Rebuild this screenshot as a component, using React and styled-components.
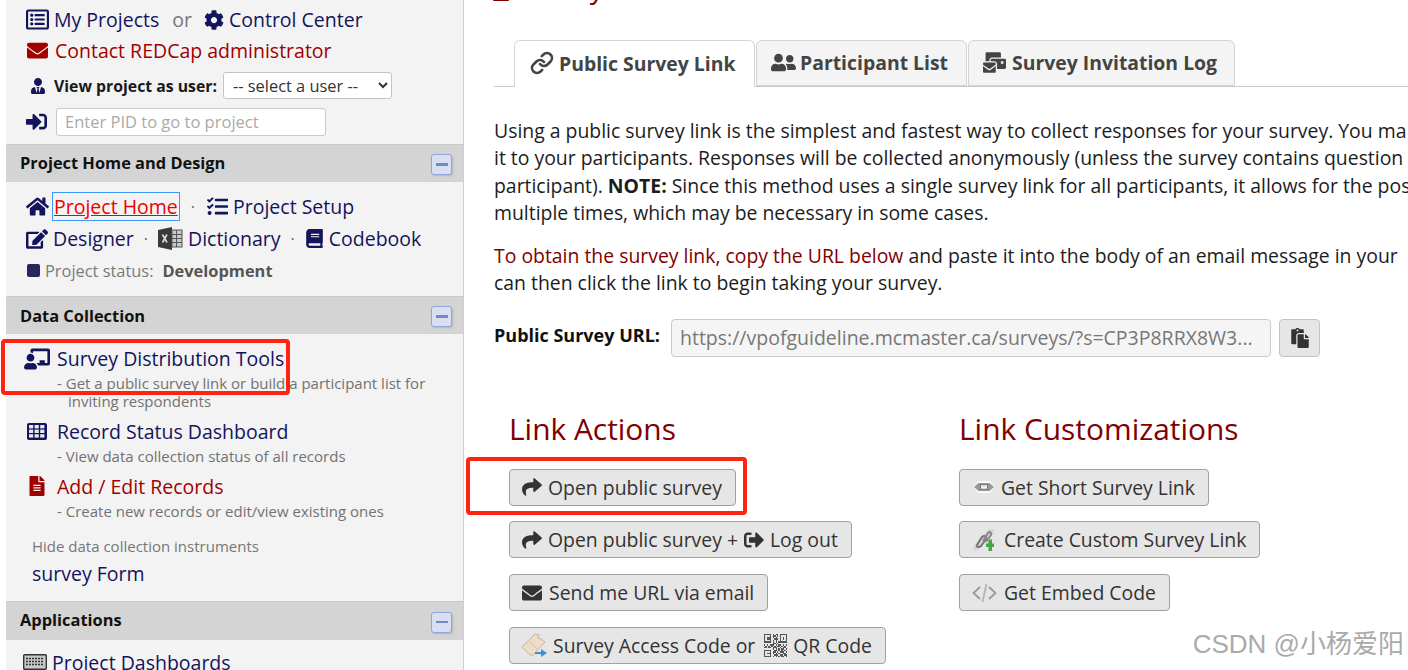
import React from 'react'
import styled, { createGlobalStyle } from 'styled-components'
import {
  FaRegListAlt, FaCog, FaEnvelope, FaUserTie, FaSignInAlt, FaHome, FaTasks, FaEdit, FaBook,
  FaChalkboardTeacher, FaFileAlt, FaUserFriends, FaMailBulk, FaPaste, FaShare, FaSignOutAlt
} from 'react-icons/fa'
import { Link as LinkIcon } from 'lucide-react'

const GlobalStyle = createGlobalStyle`
  html, body { margin: 0; padding: 0; height: 670px; overflow: hidden; background: #fff; }
  body { font-family: "Open Sans", "Noto Sans", sans-serif; }
  * { box-sizing: border-box; }
`

const NAVY = '#14145c'
const DARK_RED = '#800000'

const ExcelIcon = () => (
  <svg width="25" height="23" viewBox="0 0 25 23">
    <path d="M0 3 L14 0 V23 L0 20 Z" fill="#3a3a3a" />
    <rect x="14" y="3" width="10" height="17" fill="#c9c9c9" stroke="#555" strokeWidth="1" />
    <path d="M14 7.5H24M14 11.5H24M14 15.5H24M18.5 3V20" stroke="#555" strokeWidth="1" />
    <path d="M4.5 7.5 L9 15.5 M9 7.5 L4.5 15.5" stroke="#ddd" strokeWidth="1.6" />
  </svg>
)

const GridIcon = () => (
  <svg width="20" height="17" viewBox="0 0 20 17">
    <rect width="20" height="17" rx="2" fill={NAVY} />
    {[0, 1, 2].map(r => [0, 1, 2].map(c => (
      <rect key={r + '-' + c} x={2 + c * 5.6} y={2 + r * 4.6} width="4.2" height="3.4" fill="#e6e6ee" />
    )))}
  </svg>
)

const KeyboardIcon = () => (
  <svg width="24" height="16" viewBox="0 0 24 16">
    <rect x=".7" y=".7" width="22.6" height="14.6" rx="1" fill="#c8c8c8" stroke="#333" strokeWidth="1.4" />
    <path d="M3 4.5H21M3 7.5H21M3 10.5H21" stroke="#333" strokeWidth="1.6" strokeDasharray="2 1" />
  </svg>
)

const ZipLinkIcon = () => (
  <svg width="22" height="14" viewBox="0 0 22 14">
    <path d="M0 7 L5 1 H17 L22 7 L17 13 H5 Z" fill="#f8f8f8" />
    <path d="M1 7 L5.5 3 H16.5 L21 7 L16.5 11 H5.5 Z" fill="#989898" />
    <rect x="7.5" y="4.8" width="7" height="4.4" fill="#eee" stroke="#666" strokeWidth=".8" />
  </svg>
)

const CustomLinkIcon = () => (
  <svg width="25" height="25" viewBox="0 0 25 25">
    <path d="M1 20 L17 2 L22 2 L21 7 L6 23 L2 24 Z" fill="#d6d6d6" />
    <path d="M5 18 L10 10 C12 8 15 9 14 12 L9 19 C7 21 4 20 5 18 Z" fill="none" stroke="#777" strokeWidth="2" />
    <path d="M11 14 L16 6 C18 4 20 6 19 8 L14 15" fill="none" stroke="#8a8a8a" strokeWidth="2" />
    <path d="M16.5 16 H20 V12.5 H16.5 Z M14 16.5 H22 V20 H14 Z M16.5 16 H20 V24 H16.5 Z" fill="#43a843" />
  </svg>
)

const CodeIcon = () => (
  <svg width="25" height="20" viewBox="0 0 25 20" fill="none" stroke="#999" strokeWidth="1.8">
    <path d="M8 4 L1.5 10 L8 16" />
    <path d="M17 4 L23.5 10 L17 16" />
    <path d="M14.5 1 L10.5 19" stroke="#b5b5b5" />
  </svg>
)

const TicketIcon = () => (
  <svg width="25" height="25" viewBox="0 0 25 25">
    <path d="M0 14 L13 1 L17 2 L16 5 L19 6 L23 9 L10 23 L7 21 Z" fill="#ecdcc8" stroke="#b9ab99" strokeWidth=".8" />
    <path d="M8 9 L15 16" stroke="#b9ab99" strokeWidth=".8" strokeDasharray="2 1" />
    <path d="M13 19 H19 V16 L25 20 L19 24 V21 H13 Z" fill="#3f8fd8" />
  </svg>
)

const TitleIcon = () => (
  <svg width="16" height="20" viewBox="0 0 16 20">
    <path d="M2 0 H14 V14 H2 Z" fill="none" stroke={DARK_RED} strokeWidth="2" />
    <rect y="16" width="16" height="4" rx="1" fill={DARK_RED} />
  </svg>
)

const qrCells = [
  '1111101011011111', '1000101101010001', '1011101010010101', '1011100111010101',
  '1000101010010001', '1111101010111111', '0000001101000000', '1010111010110101',
  '0101010101101010', '1101101110010110', '0000001010101101', '1111100110101010',
  '1000101101011101', '1011101010100110', '1000100111011011', '1111101010101101'
]

const QrSvg = styled.svg`
  margin-left: 3px;
`

const QrIcon = () => (
  <QrSvg width="23" height="23" viewBox="0 0 16 16" shapeRendering="crispEdges">
    {qrCells.map((row, y) => row.split('').map((c, x) => c === '1' && <rect key={x + '-' + y} x={x} y={y} width="1" height="1" fill="#555" />))}
  </QrSvg>
)

const Page = styled.div`
  display: flex;
  width: 1408px;
  height: 670px;
  overflow: hidden;
  background: #fff;
`
const Sidebar = styled.aside`
  flex: 0 0 458px;
  height: 670px;
  margin-left: 6px;
  background: #f3f3f3;
  border-right: 1px solid #cfcfcf;
  overflow: hidden;
`
const TopLinks = styled.div`
  padding: 4px 0 0 20px;
  height: 144px;
`
const NavRow = styled.div`
  display: flex;
  align-items: center;
  height: ${p => p.$h || 31}px;
  white-space: nowrap;
`
const NavLink = styled.a`
  display: inline-flex;
  align-items: center;
  font-size: 19.5px;
  color: ${p => p.$red ? '#a00000' : NAVY};
  svg { flex: none; margin-right: ${p => p.$iconGap ?? 5}px; }
`
const MailIcon = styled(FaEnvelope)`
  color: #a00000;
  && { margin: 0 7px 0 1px; }
`
const UserIcon = styled(FaUserTie)`
  margin-left: 4px;
  color: ${NAVY};
`
const Or = styled.span`
  font-size: 19.5px;
  color: #777;
  margin: 0 12px 0 13px;
`
const Dot = styled.span`
  font-size: 16px;
  color: #666;
  margin: 0 ${p => p.$gap || 10}px;
`
const BoldLabel = styled.span`
  font-size: 15.8px;
  font-weight: 700;
  color: #1a1a1a;
  margin: 0 6px 0 8px;
`
const UserSelect = styled.select`
  width: 169px;
  height: 27px;
  font-family: inherit;
  font-size: 16.4px;
  color: #333;
  background: #fff;
  border: 1px solid #c4c4c4;
  border-radius: 3px;
  padding: 0 0 0 5px;
`
const PidInput = styled.input`
  width: 270px;
  height: 28px;
  margin-left: 9px;
  padding: 0 8px;
  font-family: inherit;
  font-size: 16.5px;
  background: #fff;
  border: 1px solid #c9c9c9;
  border-radius: 3px;
  &::placeholder { color: #aaa; opacity: 1; }
`
const SectionHead = styled.div`
  display: flex;
  align-items: center;
  justify-content: space-between;
  height: ${p => p.$h || 38}px;
  padding: 0 11px ${p => p.$lift || 0}px 14px;
  background: #d4d4d4;
  border-top: 1px solid #cacaca;
  font-size: 16.4px;
  font-weight: 700;
  color: #111;
`
const Collapse = styled.span`
  display: flex;
  align-items: center;
  justify-content: center;
  width: 21px;
  height: 21px;
  margin-top: ${p => p.$top ?? 2}px;
  background: #d9dff0;
  border: 1px solid #8ea6e0;
  border-radius: 3px;
  box-shadow: 1px 1px 2px #b5b5b5;
  &::before {
    content: "";
    width: 12px;
    height: 2.5px;
    background: #6d8acb;
  }
`
const SectionBody = styled.div`
  padding: ${p => p.$top || 8}px 0 0 ${p => p.$left || 20}px;
  height: ${p => p.$h}px;
`
const FocusLink = styled.a`
  font-size: 19.5px;
  color: #f00000;
  text-decoration: underline;
  outline: 1px solid #3b99fc;
  padding: 0 1px;
  margin-left: 4px;
  line-height: 27px;
`
const StatusRow = styled(NavRow)`
  font-size: 16.4px;
  color: #7a7a7a;
  &::before {
    content: "";
    width: 13px;
    height: 13px;
    margin-right: 5px;
    margin-left: 1px;
    border-radius: 2px;
    background: #26265e;
  }
  b { color: #555; margin-left: 9px; }
`
const ToolIcon = styled.span`
  display: flex;
  justify-content: center;
  flex: none;
  width: 31px;
  margin-right: 5px;
`
const SubText = styled.div`
  margin-left: 36px;
  padding-left: ${p => p.$wrap ? 11 : 0}px;
  text-indent: ${p => p.$wrap ? -11 : 0}px;
  font-size: 15px;
  line-height: 18px;
  color: #727272;
  width: 385px;
`
const ToolRow = styled(NavRow)`
  margin-top: ${p => p.$gap}px;
`
const HideLink = styled.div`
  margin: 16px 0 0 11px;
  font-size: 15px;
  line-height: 20px;
  color: #777;
`
const FormLink = styled.a`
  display: block;
  margin: 4px 0 0 11px;
  font-size: 19.5px;
  line-height: 27px;
  color: ${NAVY};
`
const Main = styled.main`
  flex: 1;
  min-width: 0;
  padding-left: 30px;
  overflow: hidden;
`
const Title = styled.h1`
  display: flex;
  align-items: flex-end;
  height: 40px;
  margin: -35px 0 35px;
  font-size: 28px;
  font-weight: 400;
  line-height: 36px;
  white-space: nowrap;
  color: ${DARK_RED};
  svg { margin: 0 7px 4px -1px; }
`
const Tabs = styled.div`
  display: flex;
  height: 47px;
  padding-left: 20px;
  gap: 1px;
  border-bottom: 1px solid #c8c8c8;
`
const Tab = styled.div`
  display: flex;
  align-items: center;
  gap: ${p => p.$gap || 5}px;
  height: ${p => p.$active ? 47 : 46}px;
  width: ${p => p.$w}px;
  padding: 0 0 2px ${p => p.$active ? 15 : 14}px;
  background: ${p => p.$active ? '#fff' : '#f4f4f4'};
  border: 1px solid #d4d4d4;
  border-bottom: ${p => p.$active ? 'none' : '1px solid #d4d4d4'};
  border-radius: 6px 6px 0 0;
  font-size: 19.4px;
  font-weight: 700;
  white-space: nowrap;
  color: #444;
  svg { flex: none; }
`
const Copy = styled.div`
  margin-top: ${p => p.$top}px;
  font-size: 19.4px;
  line-height: 27.3px;
  color: #1c1c1c;
  white-space: nowrap;
`
const Note = styled.span`
  color: ${DARK_RED};
`
const UrlRow = styled.div`
  display: flex;
  align-items: center;
  margin-top: 22px;
`
const UrlLabel = styled.label`
  width: 177px;
  margin-top: -5px;
  font-size: 18px;
  font-weight: 700;
  color: #111;
`
const UrlField = styled.div`
  display: flex;
  align-items: center;
  width: 600px;
  height: 38px;
  padding: 0 8px;
  font-size: 19.5px;
  color: #777;
  white-space: nowrap;
  background: #f5f5f5;
  border: 1px solid #c9c9c9;
  border-radius: 4px;
`
const CopyButton = styled.button`
  display: flex;
  align-items: center;
  justify-content: center;
  width: 41px;
  height: 38px;
  margin-left: 8px;
  color: #333;
  background: #e6e6e6;
  border: 1px solid #c4c4c4;
  border-radius: 4px;
`
const Columns = styled.div`
  display: flex;
  margin-top: 52px;
  padding-left: 15px;
`
const Column = styled.section`
  width: 450px;
  flex: none;
  display: flex;
  flex-direction: column;
  align-items: flex-start;
`
const ColumnTitle = styled.h2`
  margin: 0 0 20px;
  font-size: 29.9px;
  font-weight: 400;
  line-height: 40px;
  color: ${DARK_RED};
`
const ActionButton = styled.button`
  display: flex;
  align-items: center;
  gap: ${p => p.$gap ?? 7}px;
  height: 37px;
  margin-bottom: 15.7px;
  padding: 0 13px 0 ${p => p.$left || 12}px;
  font-family: inherit;
  font-size: 19.4px;
  color: #333;
  white-space: nowrap;
  background: #e6e6e6;
  border: 1px solid #a0a0a0;
  border-radius: 4px;
  svg { flex: none; }
`
const Highlight = styled.div`
  position: absolute;
  left: ${p => p.$x}px;
  top: ${p => p.$y}px;
  width: ${p => p.$w}px;
  height: ${p => p.$h}px;
  border: 4px solid #ff2412;
  border-radius: 4px;
`
const Watermark = styled.div`
  position: absolute;
  right: 4px;
  top: 623px;
  font-family: "Liberation Sans", "Noto Sans CJK SC", sans-serif;
  font-size: 26px;
  color: #aaa;
  white-space: nowrap;
`

const App = () => {
  return (
    <Page>
      <GlobalStyle />
      <Sidebar>
        <TopLinks>
          <NavRow>
            <NavLink><FaRegListAlt size={23} />My Projects</NavLink>
            <Or>or</Or>
            <NavLink><FaCog size={20} />Control Center</NavLink>
          </NavRow>
          <NavRow>
            <NavLink $red><MailIcon size={21} />Contact REDCap administrator</NavLink>
          </NavRow>
          <NavRow $h={39}>
            <UserIcon size={16} />
            <BoldLabel>View project as user:</BoldLabel>
            <UserSelect defaultValue="">
              <option value="">-- select a user --</option>
            </UserSelect>
          </NavRow>
          <NavRow $h={33}>
            <FaSignInAlt size={21} color={NAVY} />
            <PidInput placeholder="Enter PID to go to project" />
          </NavRow>
        </TopLinks>

        <SectionHead $lift={2}>Project Home and Design<Collapse $top={4} /></SectionHead>
        <SectionBody $h={114}>
          <NavRow $h={33}>
            <NavLink $iconGap={0}><FaHome size={23} />
            </NavLink>
            <FocusLink>Project Home</FocusLink>
            <Dot $gap={12}>·</Dot>
            <NavLink $iconGap={5}><FaTasks size={21} />Project Setup</NavLink>
          </NavRow>
          <NavRow $h={31}>
            <NavLink><FaEdit size={22} />Designer</NavLink>
            <Dot $gap={10}>·</Dot>
            <NavLink><ExcelIcon />Dictionary</NavLink>
            <Dot $gap={10}>·</Dot>
            <NavLink><FaBook size={19} />Codebook</NavLink>
          </NavRow>
          <StatusRow $h={32}>Project status: <b>Development</b></StatusRow>
        </SectionBody>

        <SectionHead>Data Collection<Collapse /></SectionHead>
        <SectionBody $h={267} $top={9} $left={15}>
          <NavRow $h={31}>
            <ToolIcon><FaChalkboardTeacher size={26} color={NAVY} /></ToolIcon>
            <NavLink>Survey Distribution Tools</NavLink>
          </NavRow>
          <SubText $wrap>- Get a public survey link or build a participant list for inviting respondents</SubText>
          <ToolRow $h={31} $gap={6}>
            <ToolIcon><GridIcon /></ToolIcon>
            <NavLink>Record Status Dashboard</NavLink>
          </ToolRow>
          <SubText>- View data collection status of all records</SubText>
          <ToolRow $h={32} $gap={5}>
            <ToolIcon><FaFileAlt size={20} color="#a00000" /></ToolIcon>
            <NavLink $red>Add / Edit Records</NavLink>
          </ToolRow>
          <SubText>- Create new records or edit/view existing ones</SubText>
          <HideLink>Hide data collection instruments</HideLink>
          <FormLink>survey Form</FormLink>
        </SectionBody>

        <SectionHead $h={39} $lift={3}>Applications<Collapse $top={5} /></SectionHead>
        <SectionBody $top={8} $left={17} $h={40}>
          <NavRow $h={28}>
            <NavLink $iconGap={5}><KeyboardIcon />Project Dashboards</NavLink>
          </NavRow>
        </SectionBody>
      </Sidebar>

      <Main>
        <Title><TitleIcon />Survey Distribution Tools</Title>
        <Tabs>
          <Tab $active $w={241}><LinkIcon size={24} strokeWidth={2.6} />Public Survey Link</Tab>
          <Tab $w={211} $gap={4}><FaUserFriends size={25} />Participant List</Tab>
          <Tab $w={267} $gap={6}><FaMailBulk size={23} />Survey Invitation Log</Tab>
        </Tabs>

        <Copy $top={30}>
          Using a public survey link is the simplest and fastest way to collect responses for your survey. You ma<br />
          it to your participants. Responses will be collected anonymously (unless the survey contains question<br />
          participant). <b>NOTE:</b> Since this method uses a single survey link for all participants, it allows for the pos<br />
          multiple times, which may be necessary in some cases.
        </Copy>
        <Copy $top={16}>
          <Note>To obtain the survey link, copy the URL below</Note> and paste it into the body of an email message in your<br />
          can then click the link to begin taking your survey.
        </Copy>

        <UrlRow>
          <UrlLabel>Public Survey URL:</UrlLabel>
          <UrlField>https://vpofguideline.mcmaster.ca/surveys/?s=CP3P8RRX8W3...</UrlField>
          <CopyButton><FaPaste size={20} /></CopyButton>
        </UrlRow>

        <Columns>
          <Column>
            <ColumnTitle>Link Actions</ColumnTitle>
            <ActionButton $gap={6}><FaShare size={20} />Open public survey</ActionButton>
            <ActionButton $gap={6}><FaShare size={20} />Open public survey +<FaSignOutAlt size={20} />Log out</ActionButton>
            <ActionButton><FaEnvelope size={20} />Send me URL via email</ActionButton>
            <ActionButton $gap={6}><TicketIcon />Survey Access Code or <QrIcon /> QR Code</ActionButton>
          </Column>
          <Column>
            <ColumnTitle>Link Customizations</ColumnTitle>
            <ActionButton $left={13} $gap={6}><ZipLinkIcon />Get Short Survey Link</ActionButton>
            <ActionButton $gap={7}><CustomLinkIcon />Create Custom Survey Link</ActionButton>
            <ActionButton $gap={7}><CodeIcon />Get Embed Code</ActionButton>
          </Column>
        </Columns>
      </Main>

      <Highlight $x={1} $y={339} $w={289} $h={56} />
      <Highlight $x={466} $y={457} $w={281} $h={58} />
      <Watermark>CSDN @小杨爱阳</Watermark>
    </Page>
  )
}

export default App
